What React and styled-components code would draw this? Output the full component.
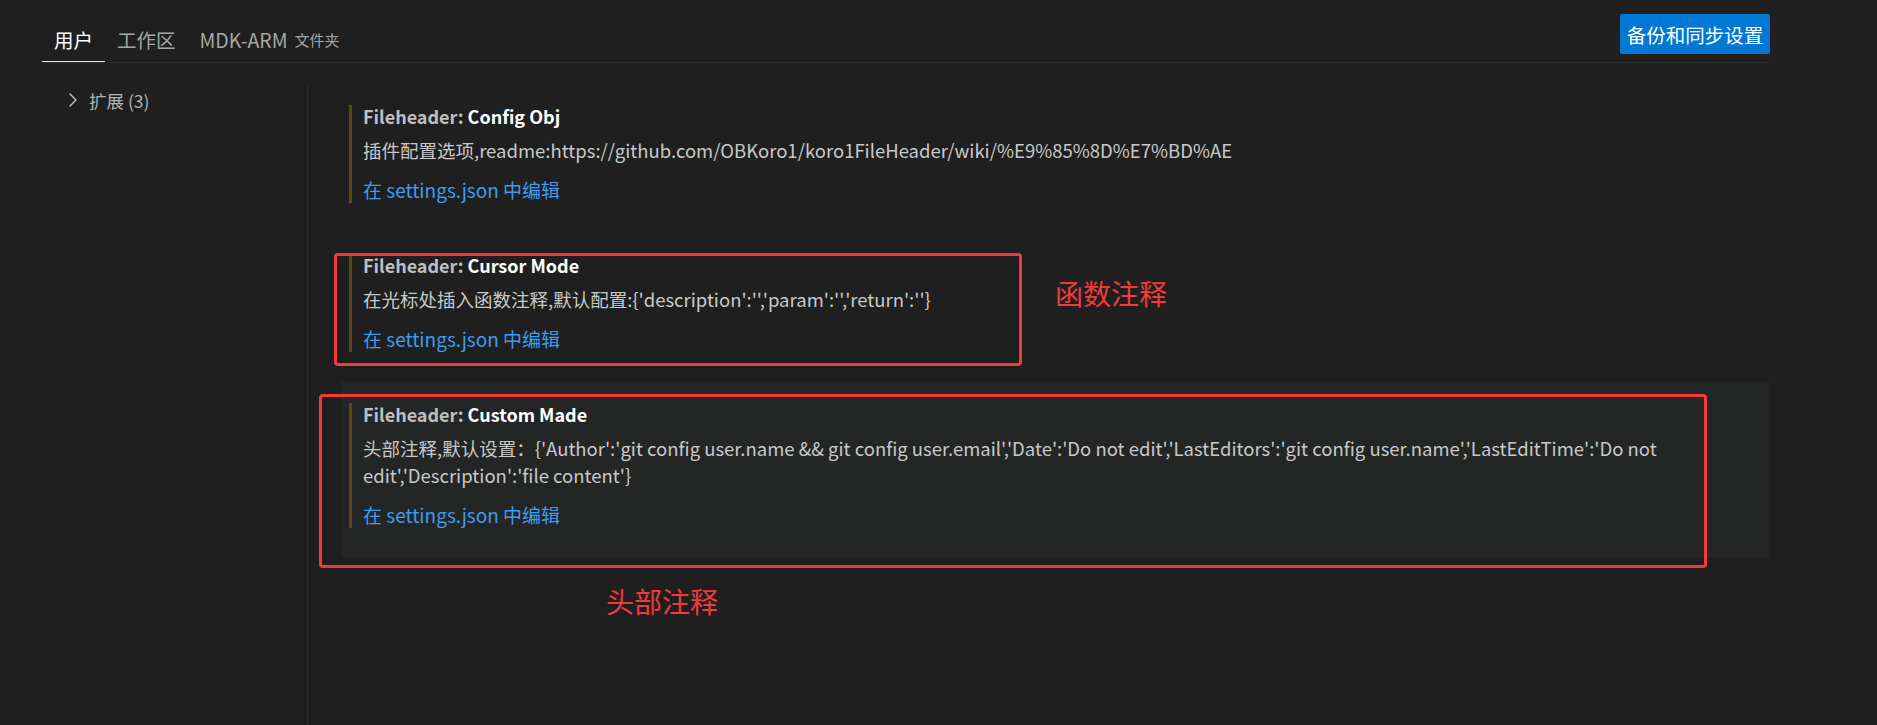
import React from "react";
import styled, { createGlobalStyle } from "styled-components";
import { ChevronRight } from "lucide-react";

// style
const GlobalStyle = createGlobalStyle`
  html, body {
    margin: 0;
    padding: 0;
    background-color: #1f1f1f;
  }
  body {
    font-family: "Noto Sans CJK SC", "Noto Sans", sans-serif;
    color: #cccccc;
  }
`;

const Page = styled.div`
  width: 1877px;
  height: 725px;
  overflow: hidden;
  background-color: #1f1f1f;
  display: flex;
  flex-direction: column;
  padding-left: 42px;
  box-sizing: border-box;
`;

const Header = styled.header`
  width: 1728px;
  height: 63px;
  box-sizing: border-box;
  border-bottom: 1px solid #2b2b2b;
  display: flex;
  justify-content: space-between;
  align-items: flex-end;
`;

const Tabs = styled.nav`
  display: flex;
  align-items: flex-end;
`;

const Tab = styled.div`
  height: 44px;
  box-sizing: border-box;
  padding: 0 12px;
  display: flex;
  align-items: center;
  gap: 7px;
  font-size: 19.5px;
  color: ${(p) => (p.$active ? "#ffffff" : "#a6a6a6")};
  border-bottom: 1px solid ${(p) => (p.$active ? "#e7e7e7" : "transparent")};
`;

const TabHint = styled.span`
  font-size: 15px;
  color: #a6a6a6;
`;

const SyncButton = styled.button`
  align-self: flex-start;
  margin-top: 14px;
  height: 40px;
  width: 150px;
  padding: 0;
  border: none;
  border-radius: 2px;
  background-color: #0078d4;
  color: #ffffff;
  font-family: inherit;
  font-size: 19.5px;
`;

const Body = styled.div`
  flex: 1;
  display: flex;
  width: 1728px;
  padding-top: 21px;
`;

const Sidebar = styled.aside`
  width: 266px;
  flex-shrink: 0;
  border-right: 1px solid #2b2b2b;
  padding-left: 19px;
  box-sizing: border-box;
`;

const TreeRow = styled.div`
  height: 32px;
  display: flex;
  align-items: center;
  gap: 4px;
  font-size: 17.5px;
  color: #b4b4b4;
  svg {
    color: #c5c5c5;
  }
`;

const Content = styled.main`
  flex: 1;
  padding-left: 33px;
`;

const SettingItem = styled.section`
  position: relative;
  padding: 22px 20px 30px 8px;
  background-color: ${(p) => (p.$focused ? "#242626" : "transparent")};
`;

const SettingBody = styled.div`
  border-left: 3px solid #5e4716;
  padding: 0 0 2px 11px;
`;

const Title = styled.div`
  font-size: 18px;
  line-height: 22px;
  font-weight: 700;
  color: #ffffff;
  margin-top: -1px;
`;

const Category = styled.span`
  color: #bfbfbf;
`;

const Description = styled.div`
  margin-top: 10px;
  font-size: 18.5px;
  line-height: 27px;
  color: #c8c8c8;
`;

const EditLink = styled.a`
  display: block;
  margin-top: 15px;
  font-size: 19px;
  line-height: 22px;
  color: #3d9cf0;
  text-decoration: none;
`;

// red annotation marks laid over the screenshot
const Mark = styled.div`
  position: absolute;
  left: ${(p) => p.$left}px;
  top: ${(p) => p.$top}px;
  width: ${(p) => p.$w}px;
  height: ${(p) => p.$h}px;
  border: 3px solid #f63a3a;
  border-radius: 4px;
  box-sizing: border-box;
  pointer-events: none;
`;

const MarkLabel = styled.span`
  position: absolute;
  left: ${(p) => p.$left}px;
  top: ${(p) => p.$top}px;
  font-size: 28px;
  line-height: 36px;
  color: #f23a3a;
  white-space: nowrap;
`;

const settings = [
  {
    id: "configObj",
    label: "Config Obj",
    desc: "插件配置选项,readme:https://github.com/OBKoro1/koro1FileHeader/wiki/%E9%85%8D%E7%BD%AE",
  },
  {
    id: "cursorMode",
    label: "Cursor Mode",
    desc: "在光标处插入函数注释,默认配置:{'description':'','param':'','return':''}",
    mark: { left: -7, top: 20, w: 688, h: 113, label: "函数注释", lx: 718, ly: 19 },
  },
  {
    id: "customMade",
    label: "Custom Made",
    focused: true,
    desc: "头部注释,默认设置：{'Author':'git config user.name && git config user.email','Date':'Do not edit','LastEditors':'git config user.name','LastEditTime':'Do not edit','Description':'file content'}",
    mark: { left: -22, top: 12, w: 1388, h: 174, label: "头部注释", lx: 284, ly: 186 },
  },
];

class App extends React.Component {
  render() {
    return (
      <Page>
        <GlobalStyle />
        <Header>
          <Tabs>
            <Tab $active>用户</Tab>
            <Tab>工作区</Tab>
            <Tab>
              MDK-ARM <TabHint>文件夹</TabHint>
            </Tab>
          </Tabs>
          <SyncButton>备份和同步设置</SyncButton>
        </Header>
        <Body>
          <Sidebar>
            <TreeRow>
              <ChevronRight size={24} strokeWidth={1.4} />
              扩展 (3)
            </TreeRow>
          </Sidebar>
          <Content>
            {settings.map((s) => (
              <SettingItem key={s.id} $focused={s.focused}>
                <SettingBody>
                  <Title>
                    <Category>Fileheader: </Category>
                    {s.label}
                  </Title>
                  <Description>{s.desc}</Description>
                  <EditLink href="#">在 settings.json 中编辑</EditLink>
                </SettingBody>
                {s.mark && (
                  <Mark $left={s.mark.left} $top={s.mark.top} $w={s.mark.w} $h={s.mark.h}>
                    <MarkLabel $left={s.mark.lx} $top={s.mark.ly}>
                      {s.mark.label}
                    </MarkLabel>
                  </Mark>
                )}
              </SettingItem>
            ))}
          </Content>
        </Body>
      </Page>
    );
  }
}

export default App;
